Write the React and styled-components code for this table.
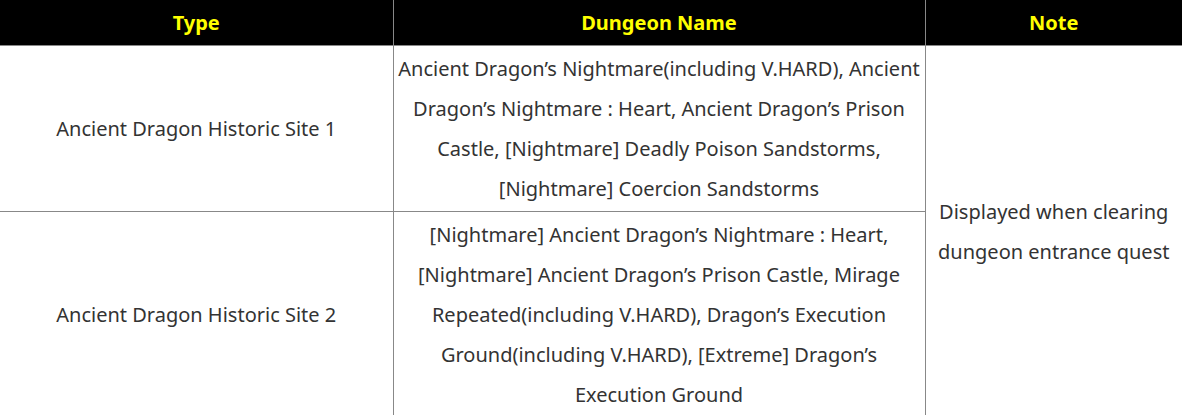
import styled, { createGlobalStyle } from 'styled-components';

const GlobalStyle = createGlobalStyle`
  body {
    margin: 0;
    background: #fff;
    font-family: "Noto Sans", "Open Sans", sans-serif;
  }
`;

const Table = styled.table`
  width: 1182px;
  border-collapse: collapse;
  table-layout: fixed;
  font-size: 20px;
  color: #333;
`;

const Head = styled.th`
  background: #000;
  color: #ffff00;
  font-weight: bold;
  height: 45px;
  padding: 0 5px;
  text-align: center;
  border-left: 1px solid #888;
  border-bottom: 1px solid #888;
  &:first-child {
    border-left: none;
  }
`;

const Cell = styled.td`
  padding: 3px 4px 2px;
  text-align: center;
  vertical-align: middle;
  line-height: 40px;
  border-left: 1px solid #888;
  border-bottom: 1px solid #888;
  &:first-child {
    border-left: none;
  }
`;

const rows = [
  {
    type: 'Ancient Dragon Historic Site 1',
    dungeons:
      'Ancient Dragon’s Nightmare(including V.HARD), Ancient Dragon’s Nightmare : Heart, Ancient Dragon’s Prison Castle, [Nightmare] Deadly Poison Sandstorms, [Nightmare] Coercion Sandstorms',
  },
  {
    type: 'Ancient Dragon Historic Site 2',
    dungeons:
      '[Nightmare] Ancient Dragon’s Nightmare : Heart, [Nightmare] Ancient Dragon’s Prison Castle, Mirage Repeated(including V.HARD), Dragon’s Execution Ground(including V.HARD), [Extreme] Dragon’s Execution Ground',
  },
];

export default function App() {
  return (
    <>
      <GlobalStyle />
      <Table>
        <colgroup>
          <col style={{ width: 393 }} />
          <col style={{ width: 532 }} />
          <col />
        </colgroup>
        <thead>
          <tr>
            <Head>Type</Head>
            <Head>Dungeon Name</Head>
            <Head>Note</Head>
          </tr>
        </thead>
        <tbody>
          {rows.map((row, i) => (
            <tr key={row.type}>
              <Cell>{row.type}</Cell>
              <Cell>{row.dungeons}</Cell>
              {i === 0 && (
                <Cell rowSpan={rows.length}>
                  Displayed when clearing dungeon entrance quest
                </Cell>
              )}
            </tr>
          ))}
        </tbody>
      </Table>
    </>
  );
}
